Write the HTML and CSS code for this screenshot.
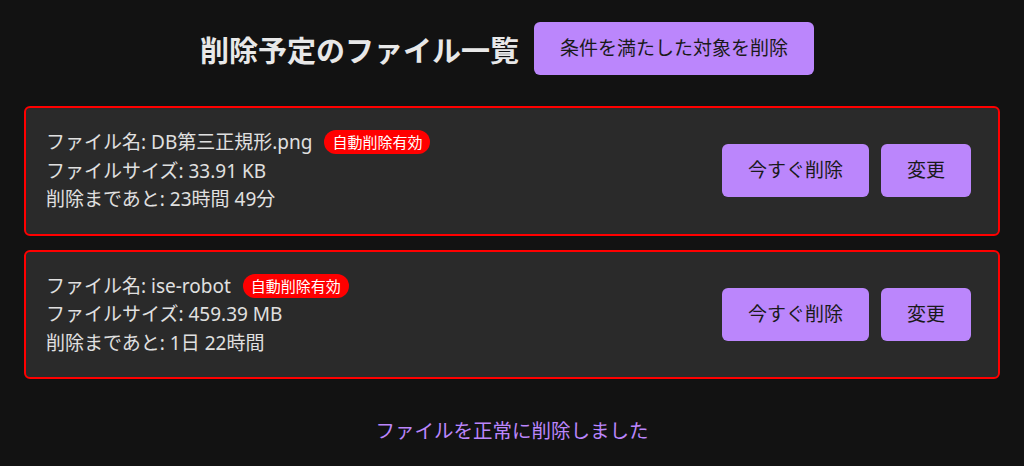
FILE: index.html
```html
<!DOCTYPE html>
<html lang="ja">
<head>
    <meta charset="UTF-8">
    <meta name="viewport" content="width=device-width, initial-scale=1.0">
    <title>削除予定のファイル一覧</title>
    <link rel="stylesheet" href="styles.css">
</head>
<body>

<div class="header">
    <h1>削除予定のファイル一覧</h1>
    <button class="btn">条件を満たした対象を削除</button>
</div>

<div class="file-list">
    <div class="file-card">
        <div class="file-info">
            <div>ファイル名: DB第三正規形.png <span class="badge">自動削除有効</span></div>
            <div>ファイルサイズ: 33.91 KB</div>
            <div>削除まであと: 23時間 49分</div>
        </div>
        <div class="actions">
            <button class="btn">今すぐ削除</button>
            <button class="btn">変更</button>
        </div>
    </div>
    <div class="file-card">
        <div class="file-info">
            <div>ファイル名: ise-robot <span class="badge">自動削除有効</span></div>
            <div>ファイルサイズ: 459.39 MB</div>
            <div>削除まであと: 1日 22時間</div>
        </div>
        <div class="actions">
            <button class="btn">今すぐ削除</button>
            <button class="btn">変更</button>
        </div>
    </div>
</div>

<p class="message">ファイルを正常に削除しました</p>

</body>
</html>
```

FILE: styles.css
```css
body {
    margin: 0;
    padding: 22px 24px 0;
    background-color: #121212;
    color: #e0e0e0;
    font-family: "Noto Sans", "Noto Sans CJK JP", sans-serif;
}
.header {
    display: flex;
    justify-content: center;
    align-items: center;
    gap: 15px;
    padding-right: 10px;
}
h1 {
    margin: 0;
    font-size: 29px;
    font-weight: bold;
    color: #e8e8e8;
}
.btn {
    background-color: #bb86fc;
    color: #1a1a1a;
    border: none;
    border-radius: 6px;
    padding: 12px 26px;
    font-family: inherit;
    font-size: 19px;
    line-height: 29px;
    cursor: pointer;
}
.file-list {
    margin-top: 31px;
    display: flex;
    flex-direction: column;
    gap: 14px;
}
.file-card {
    display: flex;
    justify-content: space-between;
    align-items: center;
    background-color: #2a2a2a;
    border: 2px solid #ff0000;
    border-radius: 6px;
    padding: 20px 27px 20px 20px;
}
.file-info {
    font-size: 19px;
    line-height: 28.5px;
}
.badge {
    display: inline-block;
    background-color: #ff0000;
    color: #fff;
    font-size: 15px;
    line-height: 24px;
    padding: 0 8px;
    border-radius: 12px;
    margin-left: 7px;
    vertical-align: 1px;
}
.actions {
    display: flex;
    gap: 12px;
}
.message {
    text-align: center;
    color: #bb86fc;
    font-size: 19.5px;
    margin-top: 36px;
}
```
